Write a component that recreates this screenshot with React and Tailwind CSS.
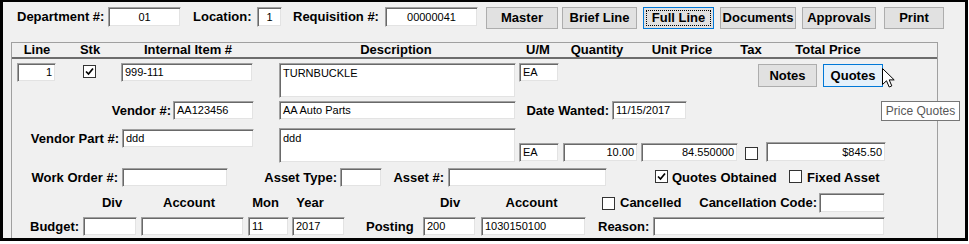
import { twMerge } from "tailwind-merge";

function Label({ className = "", children }) {
    return (
        <div
            className={twMerge(
                "flex h-[19px] shrink-0 items-center whitespace-nowrap text-[13px] font-bold text-black",
                className
            )}
        >
            {children}
        </div>
    );
}

function Field({ className = "", children }) {
    return (
        <div
            className={twMerge(
                "flex h-[19px] shrink-0 items-center overflow-hidden whitespace-nowrap border border-t-[#a0a0a0] border-l-[#a0a0a0] border-b-[#f0f0f0] border-r-[#f0f0f0] bg-white px-[3px] text-[11px] leading-[13px] text-black shadow-[inset_1px_1px_0_#696969,inset_-1px_-1px_0_#e3e3e3]",
                className
            )}
        >
            {children}
        </div>
    );
}

function Check({ checked, className = "" }) {
    return (
        <div
            className={twMerge(
                "flex h-[13px] w-[13px] shrink-0 items-center justify-center border border-[#333] bg-white",
                className
            )}
        >
            {checked && (
                <svg width="11" height="11" viewBox="0 0 11 11">
                    <path d="M2 5.5 L4.5 8 L9 2.5" fill="none" stroke="#000" strokeWidth="1.7" />
                </svg>
            )}
        </div>
    );
}

function Btn({ className = "", children }) {
    return (
        <div
            className={twMerge(
                "flex h-[22px] shrink-0 items-center justify-center border border-[#adadad] bg-[#e1e1e1] text-[13px] font-bold text-black",
                className
            )}
        >
            {children}
        </div>
    );
}

export default function App() {
    return (
        <div className="relative h-[244px] w-[969px] bg-white font-['Liberation_Sans',Arial,sans-serif]">
            <div className="flex h-[241px] w-[968px] flex-col border-t-2 border-r-[3px] border-b-[3px] border-l-[3px] border-black bg-[#f0f0f0]">
                {/* top bar */}
                <div className="flex items-start pt-[5px]">
                    <Label className="ml-[14px] h-[20px] w-[90px]">Department #:</Label>
                    <Field className="ml-[1px] h-[20px] w-[73px] justify-center">01</Field>
                    <Label className="ml-[12px] h-[20px] w-[62px]">Location:</Label>
                    <Field className="ml-[2px] h-[20px] w-[25px] justify-center">1</Field>
                    <Label className="ml-[11px] h-[20px] w-[90px]">Requisition #:</Label>
                    <Field className="ml-[2px] h-[20px] w-[93px] justify-center">00000041</Field>
                    <Btn className="ml-[8px] w-[72px]">Master</Btn>
                    <Btn className="ml-[4px] w-[75px]">Brief Line</Btn>
                    <Btn className="ml-[6px] w-[71px] border-[#0078d7] outline-1 outline-offset-[-4px] outline-dotted outline-black">
                        Full Line
                    </Btn>
                    <Btn className="ml-[6px] w-[76px]">Documents</Btn>
                    <Btn className="ml-[6px] w-[74px]">Approvals</Btn>
                    <Btn className="ml-[8px] w-[60px]">Print</Btn>
                </div>

                {/* line panel */}
                <div className="ml-[8px] mt-[13px] flex w-[927px] flex-1 flex-col border-t border-r border-l border-[#a0a0a0]">
                    <div className="flex h-[16px] items-center border-b-2 border-[#6d6d6d] text-[13px] font-bold">
                        <div className="ml-[5px] w-[40px] text-center">Line</div>
                        <div className="ml-[13px] w-[40px] text-center">Stk</div>
                        <div className="ml-[18px] w-[120px] text-center">Internal Item #</div>
                        <div className="ml-[88px] w-[120px] text-center">Description</div>
                        <div className="ml-[62px] w-[40px] text-center">U/M</div>
                        <div className="ml-[4px] w-[70px] text-center">Quantity</div>
                        <div className="ml-[10px] w-[80px] text-center">Unit Price</div>
                        <div className="ml-[9px] w-[40px] text-center">Tax</div>
                        <div className="ml-[17px] w-[80px] text-center">Total Price</div>
                    </div>

                    {/* row A */}
                    <div className="mt-[4px] flex h-[35px] items-start">
                        <Field className="ml-[5px] w-[39px] justify-end">1</Field>
                        <Check checked className="ml-[27px] mt-[2px]" />
                        <Field className="ml-[25px] w-[132px]">999-111</Field>
                        <Field className="ml-[26px] h-[35px] w-[237px] items-start pt-[3px]">TURNBUCKLE</Field>
                        <Field className="ml-[3px] w-[40px]">EA</Field>
                        <Btn className="ml-[199px] mt-[1px] h-[23px] w-[59px]">Notes</Btn>
                        <Btn className="ml-[6px] mt-[1px] h-[23px] w-[60px] border-[#0078d7] bg-[#e5f1fb]">Quotes</Btn>
                    </div>

                    {/* row B */}
                    <div className="mt-[3px] flex items-start">
                        <Label className="w-[159px] justify-end">Vendor #:</Label>
                        <Field className="ml-[2px] w-[81px]">AA123456</Field>
                        <Field className="ml-[25px] w-[237px]">AA Auto Parts</Field>
                        <Label className="ml-[3px] w-[90px] justify-end">Date Wanted:</Label>
                        <Field className="ml-[3px] w-[75px]">11/15/2017</Field>
                    </div>

                    {/* row C */}
                    <div className="mt-[8px] flex h-[35px] items-start">
                        <Label className="mt-[1px] w-[107px] justify-end">Vendor Part #:</Label>
                        <Field className="ml-[3px] mt-[1px] w-[132px]">ddd</Field>
                        <Field className="ml-[25px] h-[35px] w-[237px] items-start pt-[3px]">ddd</Field>
                        <Field className="ml-[3px] mt-[15px] w-[40px]">EA</Field>
                        <Field className="ml-[4px] mt-[15px] w-[75px] justify-end">10.00</Field>
                        <Field className="ml-[3px] mt-[15px] w-[97px] justify-end">84.550000</Field>
                        <Check className="ml-[7px] mt-[19px]" />
                        <Field className="ml-[8px] mt-[14px] h-[20px] w-[120px] justify-end">$845.50</Field>
                    </div>

                    {/* row D */}
                    <div className="mt-[5px] flex items-start">
                        <Label className="w-[106px] justify-end">Work Order #:</Label>
                        <Field className="ml-[4px] w-[106px]" />
                        <Label className="ml-[2px] w-[107px] justify-end">Asset Type:</Label>
                        <Field className="ml-[3px] w-[42px]" />
                        <Label className="ml-[2px] w-[60px] justify-end">Asset #:</Label>
                        <Field className="ml-[4px] w-[159px]" />
                        <Check checked className="ml-[48px] mt-[2px]" />
                        <Label className="ml-[4px] w-[110px]">Quotes Obtained</Label>
                        <Check className="ml-[7px] mt-[2px]" />
                        <Label className="ml-[5px]">Fixed Asset</Label>
                    </div>

                    {/* row E */}
                    <div className="mt-[6px] flex h-[20px] items-start">
                        <Label className="ml-[80px] h-[20px] w-[40px] justify-center">Div</Label>
                        <Label className="ml-[17px] h-[20px] w-[80px] justify-center">Account</Label>
                        <Label className="ml-[16px] h-[20px] w-[41px] justify-center">Mon</Label>
                        <Label className="ml-[4px] h-[20px] w-[40px] justify-center">Year</Label>
                        <Label className="ml-[100px] h-[20px] w-[40px] justify-center">Div</Label>
                        <Label className="ml-[21px] h-[20px] w-[81px] justify-center">Account</Label>
                        <Check className="ml-[30px] mt-[4px]" />
                        <Label className="ml-[5px] h-[20px] w-[73px]">Cancelled</Label>
                        <Label className="ml-[4px] h-[20px] w-[120px] justify-end">Cancellation Code:</Label>
                        <Field className="ml-[2px] h-[20px] w-[66px]" />
                    </div>

                    {/* row F */}
                    <div className="mt-[4px] flex items-start">
                        <Label className="ml-[18px] w-[53px]">Budget:</Label>
                        <Field className="w-[54px]" />
                        <Field className="ml-[4px] w-[103px]" />
                        <Field className="ml-[4px] w-[41px]">11</Field>
                        <Field className="ml-[3px] w-[53px]">2017</Field>
                        <Label className="ml-[21px] w-[57px]">Posting</Label>
                        <Field className="w-[53px]">200</Field>
                        <Field className="ml-[5px] w-[105px]">1030150100</Field>
                        <Label className="ml-[12px] w-[55px]">Reason:</Label>
                        <Field className="w-[232px]" />
                    </div>
                </div>
            </div>

            {/* mouse pointer over Quotes */}
            <svg className="absolute left-[882px] top-[68px]" width="14" height="21" viewBox="0 0 14 21">
                <path
                    d="M0.5 0.5 L0.5 16.5 L4.5 12.8 L7.2 19 L9.8 17.9 L7.2 11.9 L12.2 11.9 Z"
                    fill="#fff"
                    stroke="#000"
                    strokeWidth="1"
                    strokeLinejoin="round"
                />
            </svg>

            {/* tooltip */}
            <div className="absolute left-[881px] top-[101px] flex h-[20px] w-[79px] items-center justify-center border border-[#767676] bg-white text-[12px] text-[#575757]">
                Price Quotes
            </div>
        </div>
    );
}
